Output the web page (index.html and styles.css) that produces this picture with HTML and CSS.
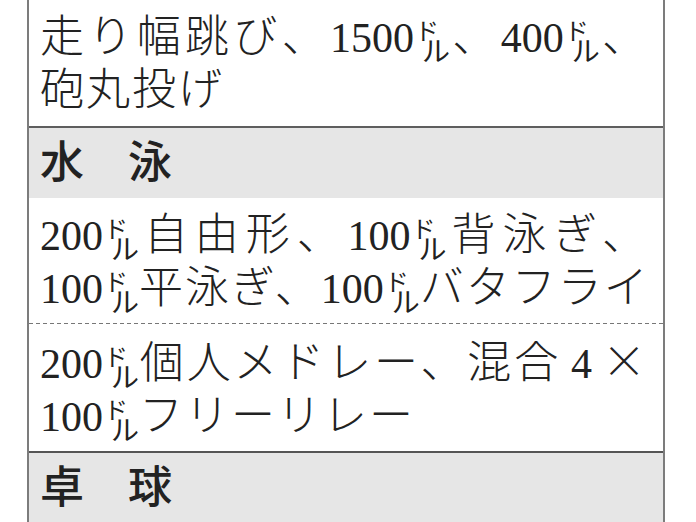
FILE: index.html
```html
<!DOCTYPE html>
<html lang="ja">
<head>
<meta charset="utf-8">
<link rel="stylesheet" href="styles.css">
</head>
<body>
<div class="table">
  <div class="row r1">
    <div class="ln jl">走り幅跳び、<span class="num">1500</span><span class="tani"><span class="to">ド</span><span class="ru">ル</span></span>、<span class="num">400</span><span class="tani"><span class="to">ド</span><span class="ru">ル</span></span>、</div>
    <div class="ln">砲丸投げ</div>
  </div>
  <div class="head">水　泳</div>
  <div class="row r3">
    <div class="ln jl"><span class="num">200</span><span class="tani"><span class="to">ド</span><span class="ru">ル</span></span>自由形、<span class="num">100</span><span class="tani"><span class="to">ド</span><span class="ru">ル</span></span>背泳ぎ、</div>
    <div class="ln jl"><span class="num">100</span><span class="tani"><span class="to">ド</span><span class="ru">ル</span></span>平泳ぎ、<span class="num">100</span><span class="tani"><span class="to">ド</span><span class="ru">ル</span></span>バタフライ</div>
  </div>
  <div class="row r4">
    <div class="ln jl"><span class="num">200</span><span class="tani"><span class="to">ド</span><span class="ru">ル</span></span>個人メドレー、混合<span class="num d4">4</span>×</div>
    <div class="ln"><span class="num">100</span><span class="tani"><span class="to">ド</span><span class="ru">ル</span></span>フリーリレー</div>
  </div>
  <div class="head">卓　球</div>
</div>
</body>
</html>
```
FILE: styles.css
```css
html, body {
  margin: 0;
  padding: 0;
  background: #ffffff;
}

.table {
  box-sizing: border-box;
  width: 638px;
  margin-left: 27px;
  border-left: 2px solid #7c7c7c;
  border-right: 2px solid #7c7c7c;
  font-family: "Noto Sans CJK JP", sans-serif;
  font-size: 44px;
  font-weight: 300;
  letter-spacing: 2px;
  color: #222222;
}

.row {
  line-height: 53px;
  padding-left: 11px;
  padding-right: 15px;
}

.r1 {
  padding-top: 7px;
  padding-bottom: 13px;
  border-bottom: 2px solid #5e5e5e;
}

.r3 {
  padding-top: 7px;
  padding-bottom: 13px;
  background-image: linear-gradient(to right, #777777 0, #777777 4px, transparent 4px);
  background-size: 7px 1px;
  background-repeat: repeat-x;
  background-position: left bottom;
}

.r4 {
  padding-top: 9px;
  padding-bottom: 12px;
  border-bottom: 2px solid #555555;
}

.head {
  background: #e6e6e6;
  padding: 5px 15px 12px 11px;
  line-height: 53px;
  font-weight: 500;
  letter-spacing: 0;
}

.ln {
  white-space: nowrap;
}

.jl {
  text-align: justify;
  text-align-last: justify;
}

.num {
  font-family: "Liberation Serif", "Times New Roman", serif;
  font-size: 42px;
  font-weight: 400;
  line-height: 1;
  letter-spacing: 0;
}

.d4 {
  margin: 0 10px;
}

.tani {
  display: inline-flex;
  flex-direction: column;
  width: 36px;
  height: 40px;
  vertical-align: middle;
  font-weight: 400;
  line-height: 20px;
  letter-spacing: 0;
}

.to {
  align-self: flex-start;
  margin-left: 1px;
  font-size: 24px;
}

.ru {
  align-self: flex-end;
  font-size: 28px;
}
```
